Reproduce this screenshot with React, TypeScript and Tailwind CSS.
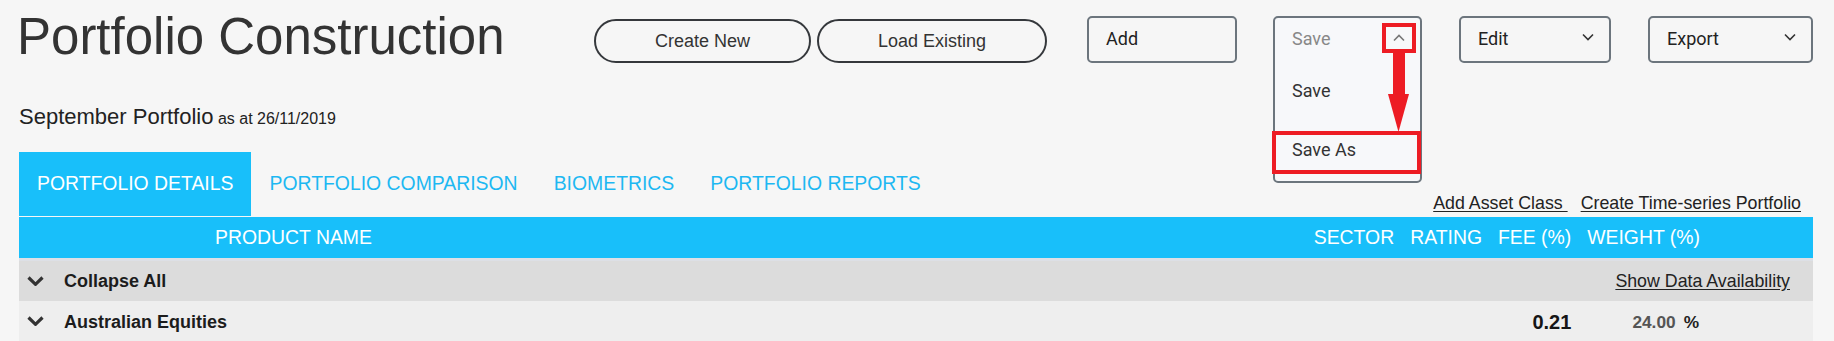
import React from 'react';

const tabs = ['PORTFOLIO DETAILS', 'PORTFOLIO COMPARISON', 'BIOMETRICS', 'PORTFOLIO REPORTS'];
const columns = ['SECTOR', 'RATING', 'FEE (%)', 'WEIGHT (%)'];

const SmallChevron: React.FC<{ up?: boolean; color?: string; className?: string }> = ({ up, color = '#333', className = '' }) => (
    <svg width="12" height="8" viewBox="0 0 12 8" fill="none" className={className}>
        <polyline points={up ? '1,6.5 6,1.5 11,6.5' : '1,1.5 6,6.5 11,1.5'} stroke={color} strokeWidth="1.6" />
    </svg>
);

const RowChevron: React.FC<{ className?: string }> = ({ className = '' }) => (
    <svg width="17" height="10" viewBox="0 0 17 10" fill="none" className={className}>
        <polyline points="1.5,1.5 8.5,8.3 15.5,1.5" stroke="#333" strokeWidth="3.2" />
    </svg>
);

const SelectBox: React.FC<{ label: string; width: string }> = ({ label, width }) => (
    <div className={`${width} h-[47px] flex justify-between items-start border-2 border-[#6c757d] rounded-[5px] pl-[17px] pr-[15px] pt-[10px] font-['Roboto',sans-serif] text-[18px] leading-[22px] text-[#222]`}>
        <span>{label}</span>
        <SmallChevron className="mt-[5px]" />
    </div>
);

export default function App() {
    return (
        <div className="min-h-screen w-full bg-[#f6f6f6] pl-[19px] pr-[21px] font-['Liberation_Sans',Arial,sans-serif]">
            {/* top bar */}
            <div className="flex justify-between items-start">
                <h1 className="mt-[11px] -ml-[2px] text-[51px] leading-none text-[#333]">Portfolio Construction</h1>
                <div className="mt-[16px] flex items-end">
                    <button className="w-[217px] h-[44px] rounded-full border-2 border-[#35383c] text-[18px] text-[#333]">Create New</button>
                    <button className="ml-[6px] w-[230px] h-[44px] rounded-full border-2 border-[#35383c] text-[18px] text-[#333]">Load Existing</button>
                    <div className="ml-[40px] w-[150px] h-[47px] border-2 border-[#6c757d] rounded-[5px] pl-[17px] pt-[10px] font-['Roboto',sans-serif] text-[18px] leading-[22px] text-[#222]">Add</div>

                    {/* open Save dropdown */}
                    <div className="relative ml-[36px] w-[149px] h-[47px]">
                        <div className="absolute left-0 top-0 z-10 w-[149px] h-[167px] border-2 border-[#6c757d] rounded-[5px] bg-[#f7f8fa] font-['Roboto',sans-serif] text-[18px] leading-[22px]">
                            <div className="h-[45px] pl-[17px] pt-[10px] text-[#888]">Save</div>
                            <div className="mt-[17px] pl-[17px] text-[#333]">Save</div>
                            <div className="mt-[37px] pl-[17px] text-[#333]">Save As</div>
                        </div>
                        <SmallChevron up color="#777" className="absolute z-20 left-[120px] top-[18px]" />
                        <div className="absolute z-20 left-[109px] top-[7px] w-[34px] h-[30px] border-4 border-[#ed1c24]" />
                        <div className="absolute z-20 -left-[1px] top-[115px] w-[149px] h-[43px] border-4 border-[#ed1c24]" />
                        <svg className="absolute z-20 left-0 top-0" width="149" height="120" viewBox="0 0 149 120">
                            <rect x="120" y="37" width="12" height="42" fill="#ed1c24" />
                            <polygon points="115,78 136,78 125.5,116" fill="#ed1c24" />
                        </svg>
                    </div>

                    <div className="ml-[37px]"><SelectBox label="Edit" width="w-[152px]" /></div>
                    <div className="ml-[37px]"><SelectBox label="Export" width="w-[165px]" /></div>
                </div>
            </div>

            <div className="mt-[41px] leading-[26px] text-[#222]">
                <span className="text-[22px]">September Portfolio</span>
                <span className="text-[16px]"> as at 26/11/2019</span>
            </div>

            {/* tabs */}
            <div className="mt-[20px] h-[64px] flex justify-between items-end">
                <div className="flex h-full">
                    {tabs.map((t, i) => (
                        <div
                            key={t}
                            className={`h-full px-[18px] flex items-center text-[19.4px] ${i === 0 ? 'bg-[#18bffa] text-white' : 'text-[#1db8f2]'}`}
                        >
                            {t}
                        </div>
                    ))}
                </div>
                <div className="pb-[3px] pr-[12px] text-[17.8px] leading-[20px] text-[#222] flex">
                    <span className="underline underline-offset-2">Add Asset Class&nbsp;</span>
                    <span className="ml-[13px] underline underline-offset-2">Create Time-series Portfolio</span>
                </div>
            </div>

            {/* table header */}
            <div className="mt-[1px] h-[41px] bg-[#18bffa] flex items-center text-white text-[19.4px]">
                <span className="pl-[196px]">PRODUCT NAME</span>
                <div className="ml-auto pr-[113px] flex gap-[16px]">
                    {columns.map((c) => (
                        <span key={c}>{c}</span>
                    ))}
                </div>
            </div>
            <div className="h-[3px] bg-[#dde0e6]" />

            <div className="h-[40px] bg-[#dcdcdc] flex items-center pl-[8px] pr-[23px]">
                <RowChevron />
                <span className="ml-[20px] font-bold text-[18px] text-[#1c1c1c]">Collapse All</span>
                <span className="ml-auto text-[17.8px] text-[#222] underline underline-offset-2">Show Data Availability</span>
            </div>
            <div className="h-[42px] bg-[#eeeeee] flex items-start pt-[10px] pl-[8px] pr-[114px] leading-[22px]">
                <RowChevron className="mt-[5px]" />
                <span className="ml-[20px] font-bold text-[18px] text-[#1c1c1c]">Australian Equities</span>
                <span className="ml-auto font-bold text-[20px] text-[#151515]">0.21</span>
                <span className="ml-[61px] font-bold text-[17.3px] text-[#555]">24.00</span>
                <span className="ml-[8px] font-bold text-[17.3px] text-[#222]">%</span>
            </div>
        </div>
    );
}
